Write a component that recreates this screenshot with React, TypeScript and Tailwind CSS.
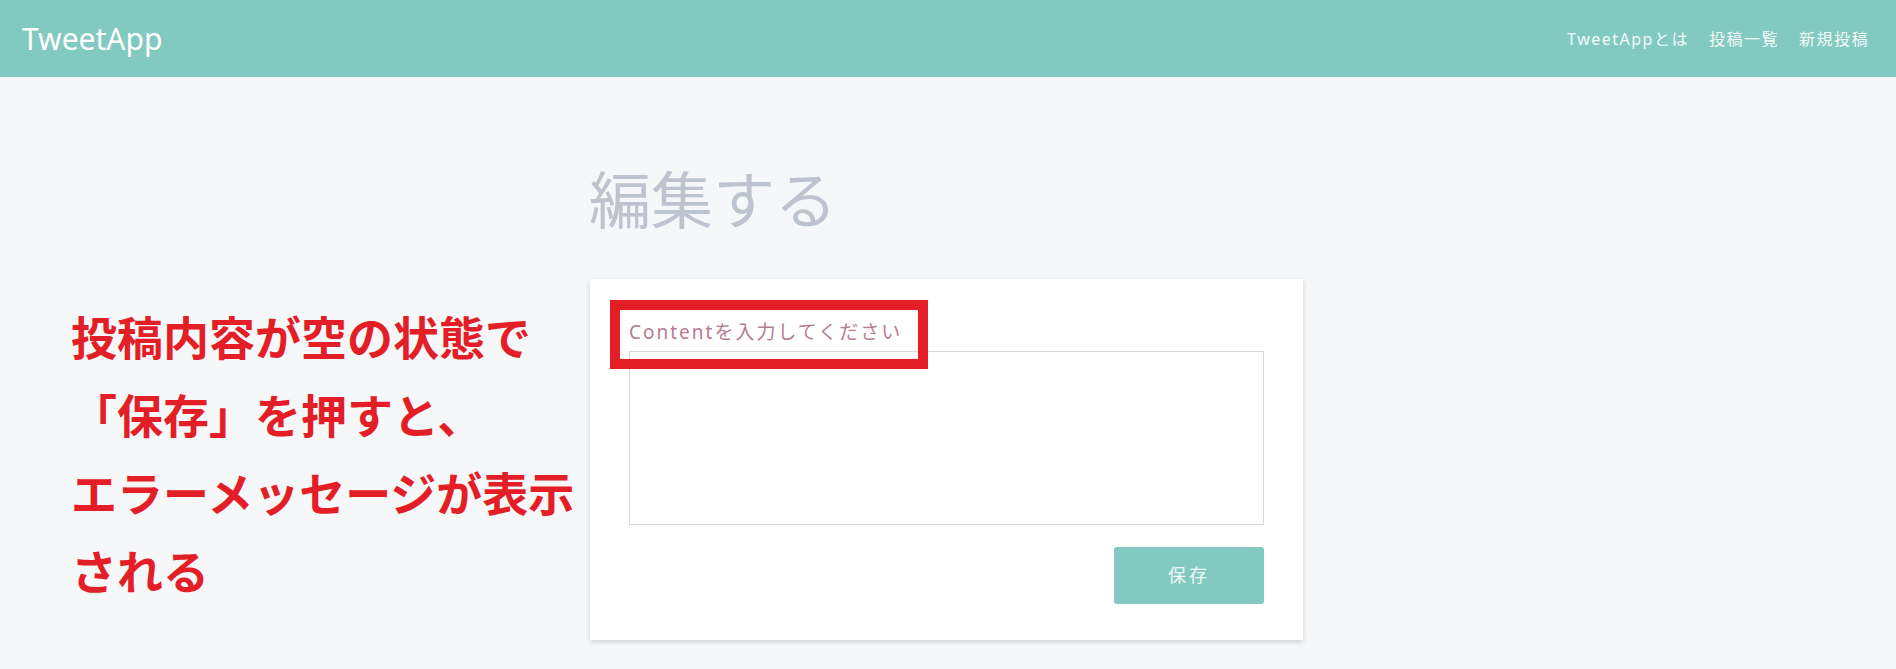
import React from "react";

const jp = "font-['Noto_Sans','Noto_Sans_CJK_JP',sans-serif]";

function Header() {
  return (
    <header className="flex h-[77px] items-center justify-between bg-[#82c9c1] pl-[22px] pr-[27px]">
      <a className="text-[30px] leading-none text-white">TweetApp</a>
      <nav className="flex items-center gap-[20px] text-[16px] tracking-[1.5px] text-[#f2faf9]">
        <a>TweetAppとは</a>
        <a>投稿一覧</a>
        <a>新規投稿</a>
      </nav>
    </header>
  );
}

function EditForm() {
  return (
    <div className="relative ml-[590px] w-[713px] bg-white px-[39px] pt-[38px] pb-[36px] shadow-[0_2px_5px_rgba(0,0,0,0.16)]">
      <p className="text-[19px] leading-[30px] tracking-[2px] text-[#b67b91]">
        Contentを入力してください
      </p>
      <textarea className="mt-[4px] block h-[174px] w-full resize-none border border-[#d9d9d9] bg-white p-2 outline-none" />
      <div className="mt-[22px] flex justify-end">
        <button className="h-[57px] w-[150px] rounded-[3px] bg-[#82c9c1] text-[18px] tracking-[3px] text-[#eef8f6]">
          保存
        </button>
      </div>
      {/* annotation box */}
      <div className="pointer-events-none absolute left-[20px] top-[21px] h-[69px] w-[318px] border-[10px] border-[#e41e26]" />
    </div>
  );
}

export default function App() {
  return (
    <div className={`relative min-h-[669px] bg-[#f5f7f9] ${jp}`}>
      <Header />
      <main className="pt-[92px]">
        <div className="ml-[589px] w-[713px]">
          <h1 className="mb-[48px] text-[62px] leading-[62px] text-[#bec4cf]">編集する</h1>
        </div>
        <EditForm />
      </main>
      {/* annotation text */}
      <div className="pointer-events-none absolute left-[71px] top-[298px] text-[46px] font-bold leading-[78px] text-[#e41e26]">
        <p>投稿内容が空の状態で</p>
        <p>「保存」を押すと、</p>
        <p>エラーメッセージが表示</p>
        <p>される</p>
      </div>
    </div>
  );
}
